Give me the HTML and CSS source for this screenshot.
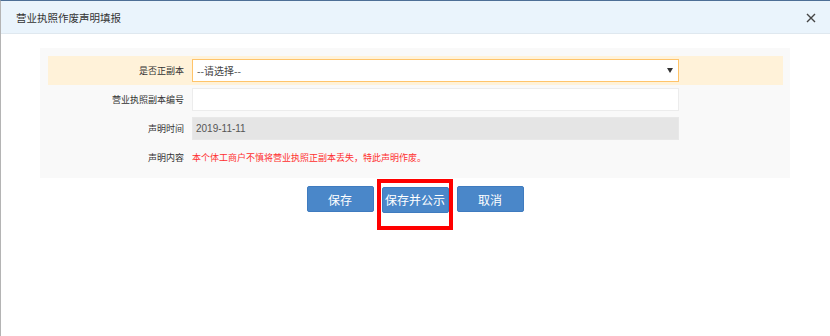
FILE: index.html
```html
<!DOCTYPE html>
<html lang="zh-CN">
<head>
<meta charset="utf-8">
<title>营业执照作废声明填报</title>
<link rel="stylesheet" href="styles.css">
</head>
<body>
<div class="dialog">
  <div class="titlebar">
    <span class="title">营业执照作废声明填报</span>
    <span class="close">
      <svg width="10" height="10" viewBox="0 0 10 10"><path d="M1 1L9 9M9 1L1 9" stroke="#444" stroke-width="1.4" fill="none"/></svg>
    </span>
  </div>
  <div class="content">
    <div class="panel">
      <div class="row row-hl">
        <div class="label">是否正副本</div>
        <div class="field select">
          <span>--请选择--</span>
          <svg class="arrow" width="6" height="5" viewBox="0 0 6 5"><path d="M0 0H6L3 5Z" fill="#333"/></svg>
        </div>
      </div>
      <div class="row">
        <div class="label">营业执照副本编号</div>
        <div class="field input"></div>
      </div>
      <div class="row">
        <div class="label">声明时间</div>
        <div class="field input disabled">2019-11-11</div>
      </div>
      <div class="row">
        <div class="label">声明内容</div>
        <div class="notice">本个体工商户不慎将营业执照正副本丢失，特此声明作废。</div>
      </div>
    </div>
    <div class="actions">
      <button class="btn">保存</button>
      <span class="marked">
        <button class="btn">保存并公示</button>
        <span class="redbox"></span>
      </span>
      <button class="btn">取消</button>
    </div>
  </div>
</div>
</body>
</html>
```
FILE: styles.css
```css
* { box-sizing: border-box; }
html, body { margin: 0; padding: 0; background: #fff; }
body {
  font-family: "Noto Sans CJK SC", "Liberation Sans", sans-serif;
  color: #333;
}
.dialog {
  width: 830px;
  height: 336px;
  border-top: 1px solid #4d6f96;
  border-left: 1px solid #b4b4b4;
  background: #fff;
}
.titlebar {
  height: 33px;
  background: #eaf4fc;
  border-bottom: 1px solid #dfe8ef;
  display: flex;
  align-items: center;
  justify-content: space-between;
  padding: 0 14px 0 15px;
}
.title { font-size: 10.5px; color: #333; }
.close { display: flex; align-items: center; margin-top: 1px; }
.content { padding: 14px 0 0 39px; }
.panel {
  width: 750px;
  height: 130px;
  background: #f9f9f9;
  padding: 8px 7px 6px 8px;
}
.row {
  height: 29px;
  display: flex;
  align-items: center;
}
.row-hl { background: #fff2d9; }
.label {
  width: 136px;
  text-align: right;
  font-size: 9px;
  color: #333;
  margin-right: 8px;
}
.field {
  width: 487px;
  height: 23px;
  background: #fff;
  border: 1px solid #ececec;
  display: flex;
  align-items: center;
  padding: 0 4px;
  font-size: 10px;
  color: #444;
}
.select {
  border-color: #ffc46a;
  justify-content: space-between;
  padding-right: 5px;
}
.disabled {
  background: #e5e5e5;
  border-color: #e8e8e8;
  color: #555;
  font-family: "Liberation Sans", "Noto Sans CJK SC", sans-serif;
  padding-left: 3px;
}
.notice { font-size: 9px; color: #ff2f2f; }
.actions {
  width: 750px;
  display: flex;
  justify-content: center;
  gap: 8px;
  margin-top: 8px;
}
.btn {
  width: 67px;
  height: 26px;
  border: 1px solid #3f7bbf;
  border-radius: 2px;
  background: #4a87c9;
  color: #fff;
  font-family: "Noto Sans CJK SC", sans-serif;
  font-size: 12px;
  padding: 0;
}
.marked { position: relative; display: inline-block; }
.redbox {
  position: absolute;
  left: -5px;
  top: -7px;
  width: 76px;
  height: 51px;
  border: 4px solid #ff0000;
}
```
